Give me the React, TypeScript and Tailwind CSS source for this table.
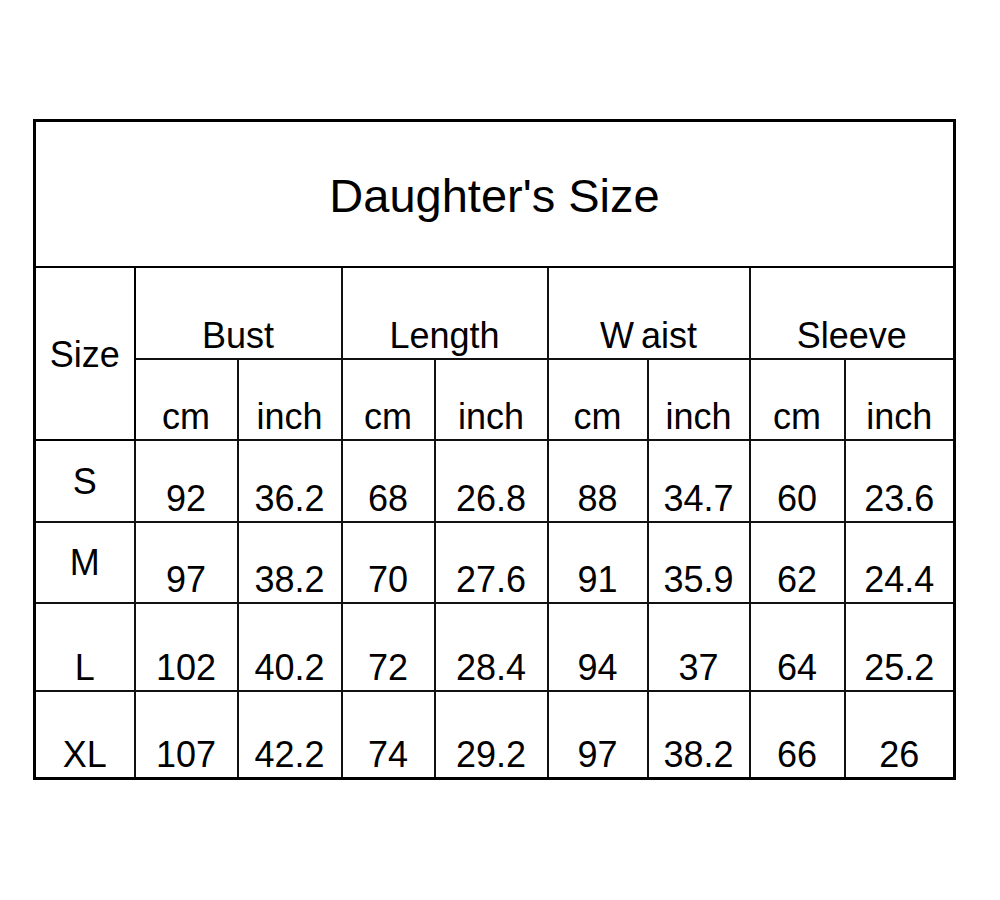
const rows = [
  { size: 'S', mid: true, vals: ['92', '36.2', '68', '26.8', '88', '34.7', '60', '23.6'], h: 'h-[82px]' },
  { size: 'M', mid: true, vals: ['97', '38.2', '70', '27.6', '91', '35.9', '62', '24.4'], h: 'h-[81px]' },
  { size: 'L', mid: false, vals: ['102', '40.2', '72', '28.4', '94', '37', '64', '25.2'], h: 'h-[88px]' },
  { size: 'XL', mid: false, vals: ['107', '42.2', '74', '29.2', '97', '38.2', '66', '26'], h: 'h-[88px]' },
];

const widths = ['w-[100px]', 'w-[103px]', 'w-[104px]', 'w-[93px]', 'w-[113px]', 'w-[100px]', 'w-[102px]', 'w-[95px]', 'w-[110px]'];

const cell = 'border-2 border-[#111] text-center align-bottom pb-[2px] px-0';
// thin divider between cm and inch columns
const thin = 'border-l-[1px] border-l-[#444]';

export default function App() {
  return (
    <div className="w-[1000px] h-[900px] bg-white pt-[119px] pl-[33px] text-black font-['Liberation_Sans',Arial,sans-serif] text-[36px] leading-[40px]">
      <table className="table-fixed border-collapse w-[922px] border-[3px] border-black">
        <colgroup>
          {widths.map((w, i) => (
            <col key={i} className={w} />
          ))}
        </colgroup>
        <tbody>
          <tr className="h-[146px]">
            <td colSpan={9} className="border-2 border-black text-center align-middle text-[47px] leading-[52px] pt-[4px]">
              Daughter's Size
            </td>
          </tr>
          <tr className="h-[92px]">
            <td rowSpan={2} className="border-2 border-black text-center align-middle pt-[4px]">
              Size
            </td>
            <td colSpan={2} className={cell}>Bust</td>
            <td colSpan={2} className={cell}>Length</td>
            <td colSpan={2} className={cell}>
              <span className="pr-[7px]">W</span>aist
            </td>
            <td colSpan={2} className={cell}>Sleeve</td>
          </tr>
          <tr className="h-[81px]">
            {['cm', 'inch', 'cm', 'inch', 'cm', 'inch', 'cm', 'inch'].map((t, i) => (
              <td key={i} className={`${cell} ${i % 2 === 1 ? thin : ''}`}>
                {t}
              </td>
            ))}
          </tr>
          {rows.map((r) => (
            <tr key={r.size} className={r.h}>
              <td className={`border-2 border-[#111] text-center ${r.mid ? 'align-middle pt-[2px]' : 'align-bottom pb-[2px]'}`}>
                {r.size}
              </td>
              {r.vals.map((v, i) => (
                <td key={i} className={`${cell} ${i % 2 === 1 ? thin : ''}`}>
                  {v}
                </td>
              ))}
            </tr>
          ))}
        </tbody>
      </table>
    </div>
  );
}
